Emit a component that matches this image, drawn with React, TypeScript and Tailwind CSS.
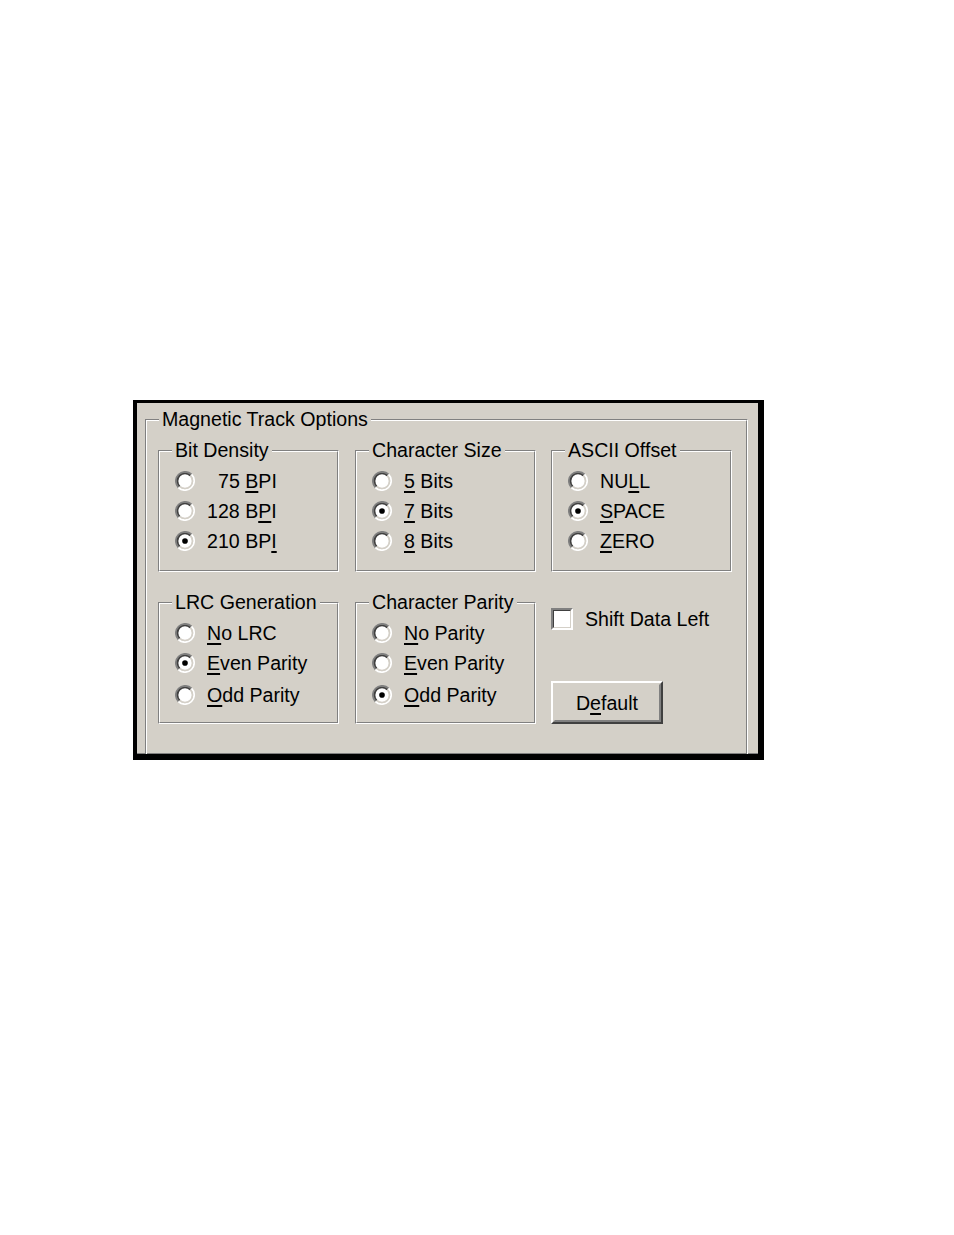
import React from "react";

type Item = { pre: string; u: string; post: string; checked?: boolean; pad?: boolean };

function Radio({ checked }: { checked?: boolean }) {
  return (
    <svg width="20" height="20" viewBox="0 0 12 12" className="shrink-0">
      <circle cx="6" cy="6" r="4.2" fill="#fff" />
      <path d="M2.111 9.889A5.5 5.5 0 0 1 9.889 2.111" stroke="#808080" strokeWidth="1.1" fill="none" />
      <path d="M9.889 2.111A5.5 5.5 0 0 1 2.111 9.889" stroke="#fff" strokeWidth="1.1" fill="none" />
      <path d="M2.818 9.182A4.5 4.5 0 0 1 9.182 2.818" stroke="#404040" fill="none" />
      <path d="M9.182 2.818A4.5 4.5 0 0 1 2.818 9.182" stroke="#d4d0c8" fill="none" />
      {checked && <circle cx="6" cy="6" r="1.7" fill="#000" />}
    </svg>
  );
}

function Mn({ pre, u, post }: { pre: string; u: string; post: string }) {
  return (
    <span className="whitespace-pre">
      {pre}
      <u className="underline decoration-[1.5px] underline-offset-[3px]">{u}</u>
      {post}
    </span>
  );
}

function Etched({
  legend,
  legendLeft,
  className,
  children,
}: {
  legend: string;
  legendLeft: string;
  className: string;
  children?: React.ReactNode;
}) {
  return (
    <div
      className={
        "relative shrink-0 border border-t-[#808080] border-l-[#808080] border-r-white border-b-white " +
        className
      }
    >
      <div className="h-full w-full border border-t-white border-l-white border-r-[#808080] border-b-[#808080]">
        {children}
      </div>
      <span
        className={
          "absolute top-[-13px] px-[3px] bg-[#d4d0c8] leading-[24px] whitespace-nowrap " + legendLeft
        }
      >
        {legend}
      </span>
    </div>
  );
}

function RadioGroup({ legend, items, lastGap }: { legend: string; items: Item[]; lastGap?: boolean }) {
  return (
    <Etched legend={legend} legendLeft="left-[13px]" className="w-[181px] h-[122px]">
      <div className="flex flex-col pt-[14px] pl-[15px]">
        {items.map((it, i) => (
          <div
            key={i}
            className={"flex items-center h-[30px] " + (lastGap && i === items.length - 1 ? "mt-[2px]" : "")}
          >
            <Radio checked={it.checked} />
            <span className={"ml-[12px] leading-[24px] " + (it.pad ? "pl-[11px]" : "")}>
              <Mn pre={it.pre} u={it.u} post={it.post} />
            </span>
          </div>
        ))}
      </div>
    </Etched>
  );
}

export default function App() {
  return (
    <div className="min-h-[1235px] w-full bg-white pt-[400px] pl-[133px] font-['Liberation_Sans',Arial,sans-serif] text-[19.6px] leading-[24px] text-black">
      <div className="w-[631px] h-[360px] overflow-hidden border-black border-t-[3px] border-l-[4px] border-r-[6px] border-b-[6px] bg-[#d4d0c8]">
        <div className="h-full border-b border-b-[#808080]">
          <div className="pt-[16px] pl-[8px]">
            <Etched legend="Magnetic Track Options" legendLeft="left-[13px]" className="w-[603px] h-[400px]">
              <div className="flex flex-col pt-[29px] pl-[11px]">
                <div className="flex">
                  <RadioGroup
                    legend="Bit Density"
                    items={[
                      { pre: "75 ", u: "B", post: "PI", pad: true },
                      { pre: "128 B", u: "P", post: "I" },
                      { pre: "210 BP", u: "I", post: "", checked: true },
                    ]}
                  />
                  <div className="ml-[16px]">
                    <RadioGroup
                      legend="Character Size"
                      items={[
                        { pre: "", u: "5", post: " Bits" },
                        { pre: "", u: "7", post: " Bits", checked: true },
                        { pre: "", u: "8", post: " Bits" },
                      ]}
                    />
                  </div>
                  <div className="ml-[15px]">
                    <RadioGroup
                      legend="ASCII Offset"
                      items={[
                        { pre: "NU", u: "L", post: "L" },
                        { pre: "", u: "S", post: "PACE", checked: true },
                        { pre: "", u: "Z", post: "ERO" },
                      ]}
                    />
                  </div>
                </div>
                <div className="flex mt-[30px]">
                  <RadioGroup
                    legend="LRC Generation"
                    lastGap
                    items={[
                      { pre: "", u: "N", post: "o LRC" },
                      { pre: "", u: "E", post: "ven Parity", checked: true },
                      { pre: "", u: "O", post: "dd Parity" },
                    ]}
                  />
                  <div className="ml-[16px]">
                    <RadioGroup
                      legend="Character Parity"
                      lastGap
                      items={[
                        { pre: "", u: "N", post: "o Parity" },
                        { pre: "", u: "E", post: "ven Parity" },
                        { pre: "", u: "O", post: "dd Parity", checked: true },
                      ]}
                    />
                  </div>
                  <div className="ml-[15px] w-[181px] h-[122px] flex flex-col justify-between">
                    <div className="flex items-center mt-[5px]">
                      <div className="w-[22px] h-[22px] border-2 border-t-[#808080] border-l-[#808080] border-r-white border-b-white">
                        <div className="w-full h-full bg-white border-[1.5px] border-t-[#404040] border-l-[#404040] border-r-[#d4d0c8] border-b-[#d4d0c8]" />
                      </div>
                      <span className="ml-[12px] whitespace-nowrap">Shift Data Left</span>
                    </div>
                    <button className="w-[112px] h-[43px] border-2 border-t-white border-l-white border-r-[#404040] border-b-[#404040] bg-[#d4d0c8] p-0">
                      <div className="w-full h-full flex items-center justify-center border-2 border-t-[#d4d0c8] border-l-[#d4d0c8] border-r-[#808080] border-b-[#808080]">
                        <Mn pre="D" u="e" post="fault" />
                      </div>
                    </button>
                  </div>
                </div>
              </div>
            </Etched>
          </div>
        </div>
      </div>
    </div>
  );
}
